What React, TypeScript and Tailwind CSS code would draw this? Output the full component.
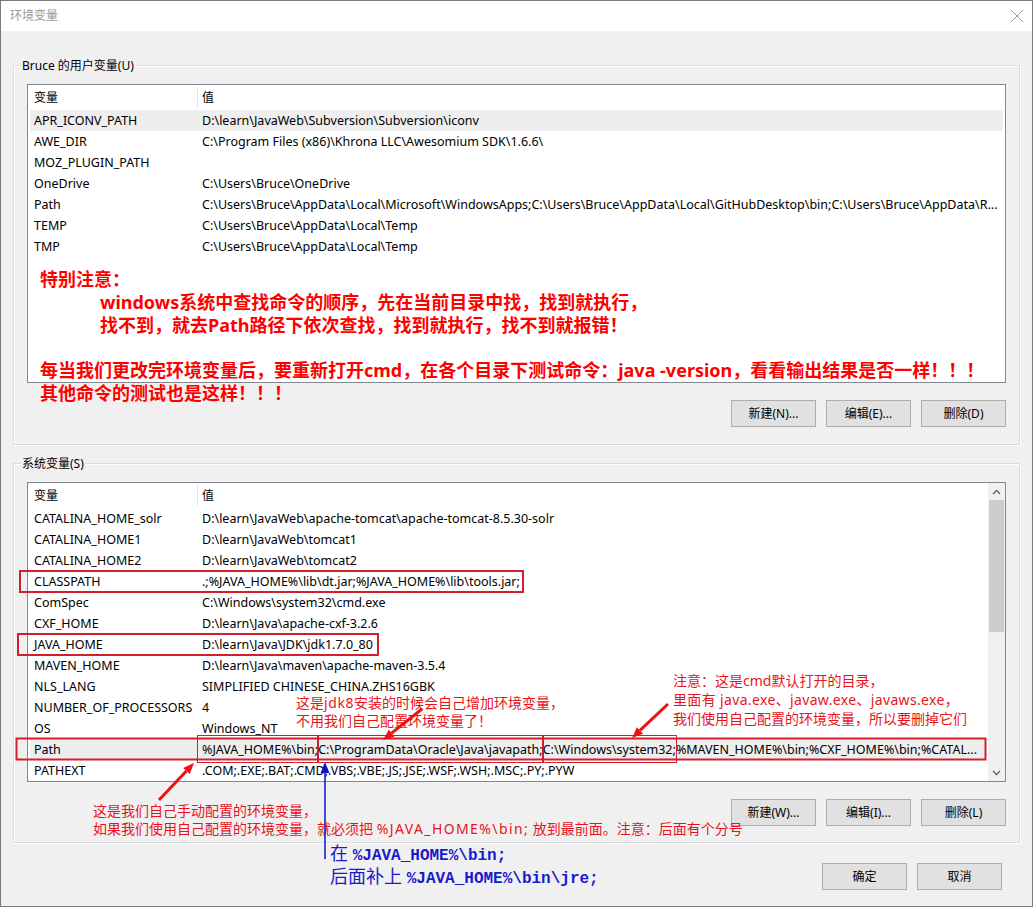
import React from 'react';

const uiFont = "font-['Noto_Sans','Noto_Sans_CJK_SC',sans-serif]";
const boxRed = '#d21f2b';

// red frame that wraps a piece of value text, stretching left to cover the name column
const Marked = ({ children, box }: { children: React.ReactNode; box: string }) => (
  <span className="relative">
    {children}
    <span className={`absolute border-[#d21f2b] ${box}`} />
  </span>
);

const userVars: [string, React.ReactNode][] = [
  ['APR_ICONV_PATH', 'D:\\learn\\JavaWeb\\Subversion\\Subversion\\iconv'],
  ['AWE_DIR', 'C:\\Program Files (x86)\\Khrona LLC\\Awesomium SDK\\1.6.6\\'],
  ['MOZ_PLUGIN_PATH', ''],
  ['OneDrive', 'C:\\Users\\Bruce\\OneDrive'],
  ['Path', 'C:\\Users\\Bruce\\AppData\\Local\\Microsoft\\WindowsApps;C:\\Users\\Bruce\\AppData\\Local\\GitHubDesktop\\bin;C:\\Users\\Bruce\\AppData\\R...'],
  ['TEMP', 'C:\\Users\\Bruce\\AppData\\Local\\Temp'],
  ['TMP', 'C:\\Users\\Bruce\\AppData\\Local\\Temp'],
];

const systemVars: [string, React.ReactNode][] = [
  ['CATALINA_HOME_solr', 'D:\\learn\\JavaWeb\\apache-tomcat\\apache-tomcat-8.5.30-solr'],
  ['CATALINA_HOME1', 'D:\\learn\\JavaWeb\\tomcat1'],
  ['CATALINA_HOME2', 'D:\\learn\\JavaWeb\\tomcat2'],
  [
    'CLASSPATH',
    <Marked box="-left-[183px] -right-[4px] -top-[3px] -bottom-[3px] border-2">
      .;%JAVA_HOME%\lib\dt.jar;%JAVA_HOME%\lib\tools.jar;
    </Marked>,
  ],
  ['ComSpec', 'C:\\Windows\\system32\\cmd.exe'],
  ['CXF_HOME', 'D:\\learn\\Java\\apache-cxf-3.2.6'],
  [
    'JAVA_HOME',
    <Marked box="-left-[185px] -right-[6px] -top-[3px] -bottom-[3px] border-2">
      D:\learn\Java\JDK\jdk1.7.0_80
    </Marked>,
  ],
  ['MAVEN_HOME', 'D:\\learn\\Java\\maven\\apache-maven-3.5.4'],
  ['NLS_LANG', 'SIMPLIFIED CHINESE_CHINA.ZHS16GBK'],
  ['NUMBER_OF_PROCESSORS', '4'],
  ['OS', 'Windows_NT'],
  [
    'Path',
    <>
      <Marked box="-left-[5px] -right-[1px] -top-[6px] -bottom-[5px] border-[1.5px]">%JAVA_HOME%\bin;</Marked>
      <Marked box="-left-[1px] -right-[1px] -top-[6px] -bottom-[5px] border-[1.5px]">C:\ProgramData\Oracle\Java\javapath;</Marked>
      <Marked box="-left-[1px] -right-[1px] -top-[6px] -bottom-[5px] border-[1.5px]">C:\Windows\system32;</Marked>
      %MAVEN_HOME%\bin;%CXF_HOME%\bin;%CATAL...
    </>,
  ],
  ['PATHEXT', '.COM;.EXE;.BAT;.CMD;.VBS;.VBE;.JS;.JSE;.WSF;.WSH;.MSC;.PY;.PYW'],
];

const Button = ({ label, className = '' }: { label: string; className?: string }) => (
  <button className={`w-[85px] h-[27px] bg-[#e1e1e1] border border-[#adadad] text-[12px] text-black ${className}`}>
    {label}
  </button>
);

const VarList = ({
  rows,
  selected,
  scroll,
  height,
}: {
  rows: [string, React.ReactNode][];
  selected: number;
  scroll?: boolean;
  height: string;
}) => (
  <div className={`flex border border-[#828790] bg-white ${height}`}>
    <div className="flex-1 min-w-0 px-[2px]">
      <div className="flex h-[25px] items-center text-[12px] text-black">
        <div className="w-[168px] h-[21px] shrink-0 pl-[4px] border-r border-[#e5e5e5] flex items-center">变量</div>
        <div className="pl-[4px]">值</div>
      </div>
      {rows.map(([name, value], i) => (
        <div
          key={name}
          className={`flex h-[21px] pt-[1px] items-center text-[12.5px] text-black whitespace-nowrap ${i === selected ? 'bg-[#eeeeee]' : ''}`}
        >
          <div className="w-[168px] shrink-0 pl-[4px]">{name}</div>
          <div className="flex-1 min-w-0 pl-[4px]">{value}</div>
        </div>
      ))}
    </div>
    {scroll && (
      <div className="w-[17px] shrink-0 bg-[#f0f0f0] flex flex-col items-center">
        <div className="h-[17px] flex items-center justify-center">
          <svg width="9" height="6" viewBox="0 0 9 6">
            <polyline points="1,5 4.5,1.5 8,5" fill="none" stroke="#606060" strokeWidth="1.3" />
          </svg>
        </div>
        <div className="w-[15px] h-[132px] bg-[#cdcdcd]" />
        <div className="flex-1" />
        <div className="h-[17px] flex items-center justify-center">
          <svg width="9" height="6" viewBox="0 0 9 6">
            <polyline points="1,1 4.5,4.5 8,1" fill="none" stroke="#606060" strokeWidth="1.3" />
          </svg>
        </div>
      </div>
    )}
  </div>
);

const GroupBox = ({ title, children, className = '' }: { title: string; children: React.ReactNode; className?: string }) => (
  <div className={`h-[380px] border border-[#dcdcdc] shadow-[inset_1px_1px_0_#fff,1px_1px_0_#fff] px-[13px] ${className}`}>
    <div className="-mt-[9px] -ml-[6px] w-fit bg-[#f0f0f0] px-[1px] text-[12px] leading-[17px] text-black">{title}</div>
    {children}
  </div>
);

const Arrow = ({ x1, y1, x2, y2, color, width = 3 }: { x1: number; y1: number; x2: number; y2: number; color: string; width?: number }) => {
  const a = Math.atan2(y2 - y1, x2 - x1);
  const len = 11;
  const half = 4.5;
  const bx = x2 - len * Math.cos(a);
  const by = y2 - len * Math.sin(a);
  const p1 = `${bx + half * Math.sin(a)},${by - half * Math.cos(a)}`;
  const p2 = `${bx - half * Math.sin(a)},${by + half * Math.cos(a)}`;
  return (
    <g>
      <line x1={x1} y1={y1} x2={bx} y2={by} stroke={color} strokeWidth={width} />
      <polygon points={`${x2},${y2} ${p1} ${p2}`} fill={color} />
    </g>
  );
};

export default function App() {
  return (
    <div className={`relative w-[1033px] h-[907px] overflow-hidden bg-[#f0f0f0] border border-[#7a7a7a] ${uiFont}`}>
      {/* title bar */}
      <div className="h-[30px] bg-white flex items-center justify-between pl-[9px] pr-[8px]">
        <span className="text-[12px] text-[#999999]">环境变量</span>
        <svg width="14" height="14" viewBox="0 0 14 14">
          <path d="M1 1 L13 13 M13 1 L1 13" stroke="#9a9a9a" strokeWidth="1" />
        </svg>
      </div>

      <div className="px-[12px] pt-[34px]">
        <GroupBox title="Bruce 的用户变量(U)">
          <div className="mt-[10px]">
            <VarList rows={userVars} selected={0} height="h-[299px]" />
          </div>
          <div className="flex justify-end gap-[10px] mt-[17px]">
            <Button label="新建(N)..." />
            <Button label="编辑(E)..." />
            <Button label="删除(D)" />
          </div>
        </GroupBox>

        <GroupBox title="系统变量(S)" className="mt-[18px]">
          <div className="mt-[10px]">
            <VarList rows={systemVars} selected={11} scroll height="h-[300px]" />
          </div>
          <div className="flex justify-end gap-[10px] mt-[17px]">
            <Button label="新建(W)..." />
            <Button label="编辑(I)..." />
            <Button label="删除(L)" />
          </div>
        </GroupBox>

        <div className="flex justify-end gap-[10px] mt-[20px] pr-[18px]">
          <Button label="确定" className="h-[26px]" />
          <Button label="取消" className="h-[26px]" />
        </div>
      </div>

      {/* annotations */}
      <div className="absolute -left-px -top-px w-[1033px] h-[907px] pointer-events-none">
        <div className="absolute left-[40px] top-[268px] text-[18px] font-bold leading-[23px] text-[#ff0000] whitespace-nowrap">
          <div>特别注意：</div>
          <div className="pl-[60px]">windows系统中查找命令的顺序，先在当前目录中找，找到就执行，</div>
          <div className="pl-[60px]">找不到，就去Path路径下依次查找，找到就执行，找不到就报错！</div>
          <div className="h-[22px]" />
          <div>每当我们更改完环境变量后，要重新打开cmd，在各个目录下测试命令：java -version，看看输出结果是否一样！！！</div>
          <div>其他命令的测试也是这样！！！</div>
        </div>

        <div className="absolute left-[296px] top-[694px] text-[14px] leading-[18px] text-[#e8141c] whitespace-nowrap">
          <div>这是<span className="tracking-[0.6px]">jdk8</span>安装的时候会自己增加环境变量，</div>
          <div>不用我们自己配置环境变量了！</div>
        </div>

        <div className="absolute left-[673px] top-[671px] text-[14px] leading-[19px] text-[#e8141c] whitespace-nowrap">
          <div>注意：这是cmd默认打开的目录，</div>
          <div className="tracking-[0.35px]">里面有 java.exe、javaw.exe、javaws.exe，</div>
          <div>我们使用自己配置的环境变量，所以要删掉它们</div>
        </div>

        <div className="absolute left-[93px] top-[802px] text-[14px] leading-[18px] text-[#e8141c] whitespace-nowrap">
          <div>这是我们自己手动配置的环境变量，</div>
          <div>
            如果我们使用自己配置的环境变量，就必须把 <span className="tracking-[1.4px]">%JAVA_HOME%\bin;</span> 放到最前面。注意：后面有个分号
          </div>
        </div>

        <div className="absolute left-[330px] top-[843px] text-[18px] leading-[20px] text-[#1a1acc] whitespace-nowrap">
          <div>
            在 <span className="text-[16px] font-['Liberation_Mono',monospace] font-bold">%JAVA_HOME%\bin;</span>
          </div>
          <div>
            后面补上 <span className="text-[16px] font-['Liberation_Mono',monospace] font-bold">%JAVA_HOME%\bin\jre;</span>
          </div>
        </div>

        <svg className="absolute left-0 top-0" width="1033" height="907" viewBox="0 0 1033 907">
          <rect x="16.5" y="738.5" width="969" height="21" fill="none" stroke={boxRed} strokeWidth="2" />
          <Arrow x1={422} y1={709} x2={383} y2={740} color="#ee1111" />
          <Arrow x1={668} y1={704} x2={632} y2={738} color="#ee1111" />
          <Arrow x1={159} y1={800} x2={194} y2={763} color="#ee1111" />
          <Arrow x1={325} y1={859} x2={325} y2={762} color="#1111cc" width={1.5} />
        </svg>
      </div>
    </div>
  );
}
